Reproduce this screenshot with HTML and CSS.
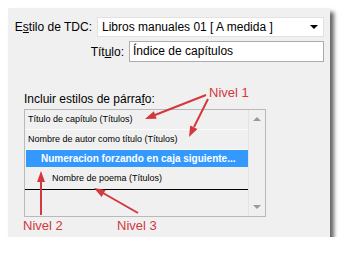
FILE: index.html
```html
<!DOCTYPE html>
<html lang="es">
<head>
    <meta charset="UTF-8">
    <title>Estilo de TDC</title>
    <link rel="stylesheet" href="styles.css">
</head>
<body>

    <div class="panel">
        <div class="field-row">
            <label>E<u>s</u>tilo de TDC:</label>
            <div class="select">
                <span>Libros manuales 01 [ A medida ]</span>
                <span class="caret"></span>
            </div>
        </div>
        <div class="field-row second">
            <label>Tít<u>u</u>lo:</label>
            <div class="input">Índice de capítulos</div>
        </div>

        <div class="styles-block">
            <div class="block-label">Incluir estilos de párra<u>f</u>o:</div>
            <div class="listbox">
                <div class="list">
                    <div class="item">Título de capítulo (Títulos)</div>
                    <div class="item">Nombre de autor como título (Títulos)</div>
                    <div class="item selected">Numeracion forzando en caja siguiente...</div>
                    <div class="item level3">Nombre de poema (Títulos)</div>
                </div>
                <div class="scrollbar">
                    <span class="arrow up"></span>
                    <span class="arrow down"></span>
                </div>
            </div>
        </div>
    </div>

    <!-- anotaciones en rojo -->
    <svg class="notes" width="343" height="253" viewBox="0 0 343 253">
        <g class="red">
            <line x1="206" y1="95" x2="155" y2="115" />
            <polygon points="145,119 156.7,118.7 153.8,111.2" />
            <line x1="208" y1="99" x2="194" y2="127" />
            <polygon points="189,137 197.4,128.9 190.2,125.4" />
            <line x1="41" y1="215" x2="41" y2="182" />
            <polygon points="41,171 37,182 45,182" />
            <line x1="138" y1="213" x2="103" y2="193" />
            <polygon points="94,188 105.6,189.9 101.6,196.9" />
        </g>
        <text x="209" y="97">Nivel 1</text>
        <text x="23" y="230">Nivel 2</text>
        <text x="117" y="230">Nivel 3</text>
    </svg>

</body>
</html>
```

FILE: styles.css
```css
* {
    margin: 0;
    padding: 0;
    box-sizing: border-box;
}

body {
    background: #fff;
    font-family: "Liberation Sans", Arial, sans-serif;
    font-size: 12px;
    color: #000;
    position: relative;
}

.panel {
    margin: 8px 0 0 8px;
    width: 322px;
    height: 229px;
    background: #f0f0f0;
    padding: 9px 6px 0 7px;
    box-shadow: 4px 4px 4px rgba(0, 0, 0, 0.6);
}

.field-row {
    display: flex;
    justify-content: flex-end;
    align-items: center;
    gap: 5px;
}

.field-row label {
    white-space: nowrap;
}

.field-row.second {
    margin-top: 4px;
}

.select {
    flex: none;
    width: 227px;
    height: 20px;
    background: #fff;
    border: 1px solid #e2e2e2;
    display: flex;
    align-items: center;
    justify-content: space-between;
    padding: 0 5px 0 4px;
}

.caret {
    width: 0;
    height: 0;
    border-left: 4px solid transparent;
    border-right: 4px solid transparent;
    border-top: 4px solid #000;
}

.input {
    flex: none;
    width: 195px;
    height: 21px;
    background: #fff;
    border: 1px solid #acacac;
    padding: 0 0 0 3px;
    line-height: 19px;
}

.styles-block {
    margin: 30px 0 0 9px;
}

.block-label {
    line-height: 14px;
    margin-bottom: 3px;
}

.listbox {
    width: 242px;
    height: 108px;
    border: 1px solid #b9b9b9;
    display: flex;
}

.list {
    flex: 1;
}

.item {
    height: 20px;
    line-height: 19px;
    border-bottom: 1px solid #fbfbfb;
    padding-left: 3px;
    font-size: 9px;
}

.item.selected {
    height: 17px;
    line-height: 17px;
    margin: 0 0 1px 1px;
    border: none;
    background: #3399ff;
    color: #fff;
    font-weight: bold;
    font-size: 10px;
    padding-left: 15px;
}

.item.level3 {
    height: 22px;
    line-height: 21px;
    padding-left: 27px;
    border-bottom: 1px solid #000;
}

.scrollbar {
    width: 17px;
    border-left: 1px solid #e4e4e4;
    background: #f0f0f0;
    display: flex;
    flex-direction: column;
    justify-content: space-between;
    align-items: center;
    padding: 7px 0 7px;
}

.arrow {
    width: 0;
    height: 0;
    border-left: 4px solid transparent;
    border-right: 4px solid transparent;
}

.arrow.up {
    border-bottom: 4px solid #9a9a9a;
}

.arrow.down {
    border-top: 4px solid #9a9a9a;
}

.notes {
    position: absolute;
    top: 0;
    left: 0;
}

.notes .red line {
    stroke: #d2383c;
    stroke-width: 2;
}

.notes .red polygon {
    fill: #d2383c;
}

.notes text {
    font-family: "Liberation Sans", Arial, sans-serif;
    font-size: 13px;
    fill: #d2383c;
}
```
